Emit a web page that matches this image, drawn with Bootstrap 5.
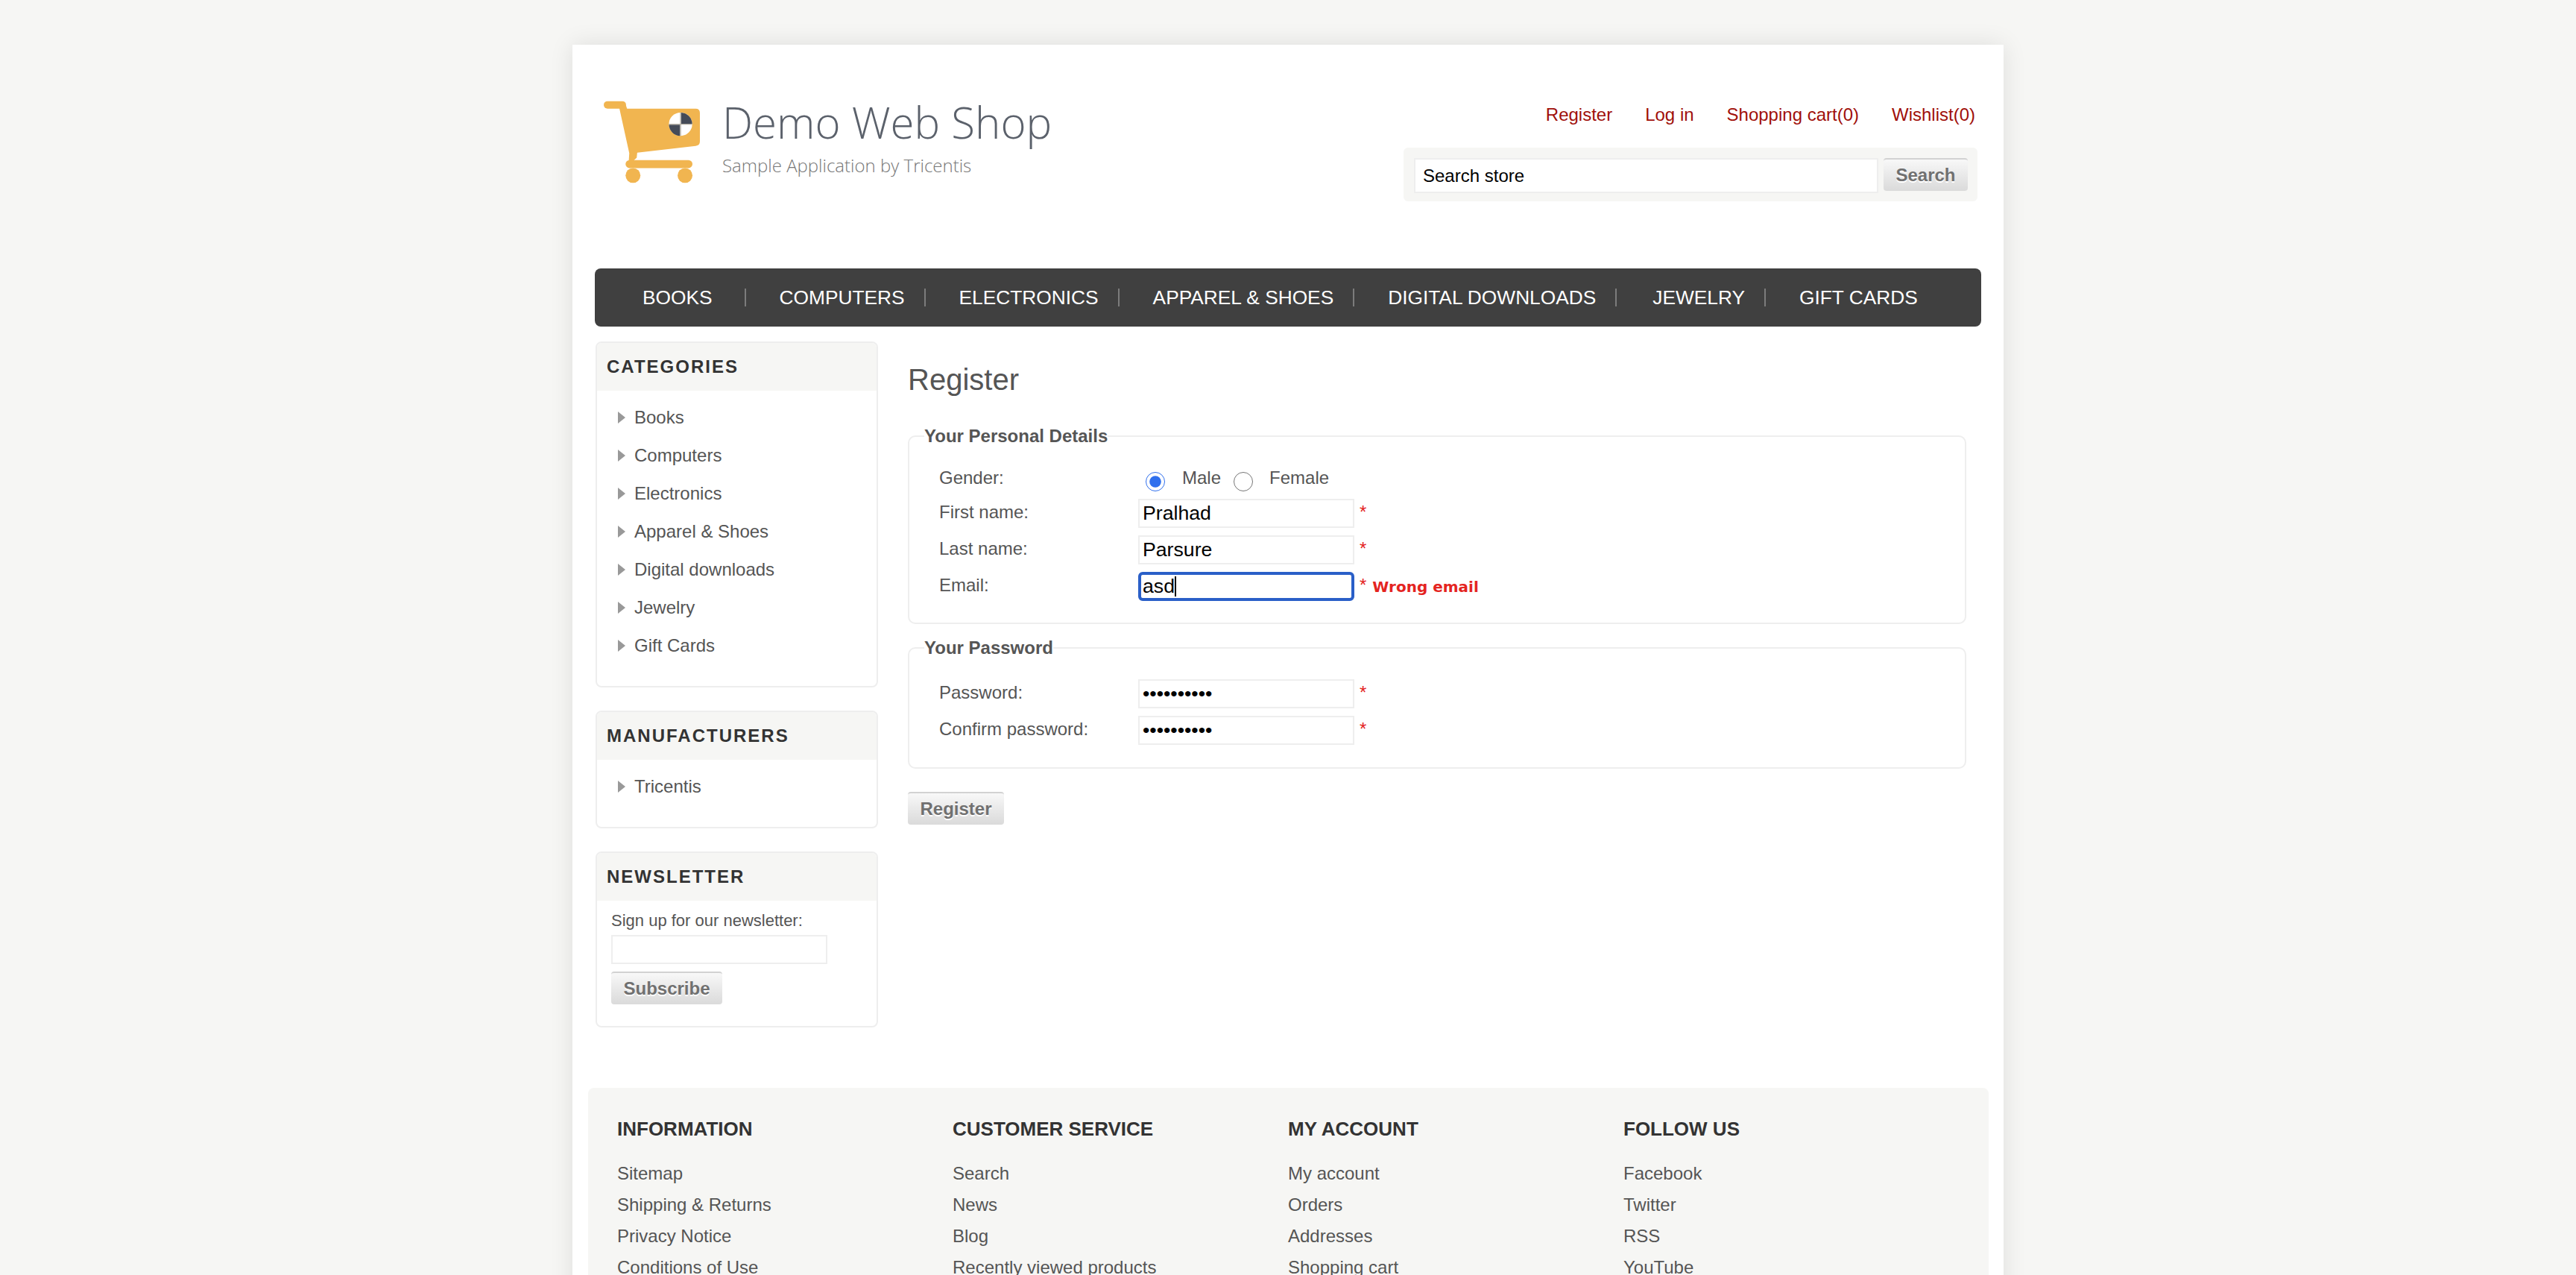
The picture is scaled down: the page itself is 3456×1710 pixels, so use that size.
<!DOCTYPE html>
<html lang="en">
<head>
    <meta charset="UTF-8">
    <title>Demo Web Shop. Register</title>
    <link href="https://cdn.jsdelivr.net/npm/bootstrap@5.3.0/dist/css/bootstrap.min.css" rel="stylesheet">
    <style>
        html, body {
            height: 100vh;
            overflow: hidden;
        }

        body {
            background-color: #f6f6f4;
            font-family: "Liberation Sans", Arial, sans-serif;
            font-size: 24px;
            line-height: 36px;
            color: #555;
        }

        a {
            color: inherit;
            text-decoration: none;
        }

        .page-wrap {
            width: 1920px;
            height: 1700px;
            margin: 60px auto 0;
            background-color: #fff;
            box-shadow: 0 0 30px rgba(0, 0, 0, .1);
        }

        /* header */
        .shop-head {
            height: 300px;
            padding: 75px 35px 0 41px;
        }

        .logo-cart {
            width: 131px;
            height: 111px;
        }

        .logo-text {
            margin-left: 29px;
            font-family: "Open Sans", sans-serif;
        }

        .logo-title {
            font-size: 58.2px;
            line-height: 58px;
            font-weight: 300;
            color: #5b616b;
        }

        .logo-sub {
            margin-top: 14px;
            font-size: 24px;
            line-height: 30px;
            font-weight: 300;
            color: #777;
        }

        .head-links {
            gap: 44px;
            padding-right: 3px;
            margin-top: 1px;
            margin-bottom: 26px;
            color: #a00f0a;
        }

        .search-box {
            width: 770px;
            height: 72px;
            padding: 14px 13px 14px 14px;
            background-color: #f6f6f4;
            border-radius: 6px;
        }

        .search-input {
            width: 623px;
            height: 47px;
            padding: 0 10px;
            font-size: 24px;
        }

        .shop-field {
            border: 2px solid #eee;
            background-color: #fff;
            color: #000;
            outline: 0;
        }

        .shop-btn {
            height: 44px;
            padding: 0 16.5px;
            border: 0;
            border-top: 2px solid #d2d2d2;
            border-radius: 4px;
            background: linear-gradient(#f8f8f8, #dadada);
            font-weight: 700;
            font-size: 24px;
            line-height: 38px;
            color: #707070;
            text-shadow: 0 2px 0 #fff;
        }

        /* menu */
        .top-menu {
            height: 78px;
            margin: 0 30px;
            padding-left: 18px;
            background-color: #404040;
            border-radius: 8px;
            font-size: 26.3px;
            line-height: 24px;
            color: #fff;
        }

        .top-menu li {
            padding: 0 26px 0 45px;
            border-right: 2px solid #7c7c7c;
        }

        .top-menu li:first-child {
            padding-left: 46px;
            padding-right: 43px;
        }

        .top-menu li:nth-child(6) {
            padding-left: 48px;
        }

        .top-menu li:last-child {
            border-right: 0;
        }

        .content-row {
            margin-top: 20px;
        }

        /* sidebar */
        .side-col {
            width: 379px;
            margin-left: 31px;
            flex-shrink: 0;
        }

        .side-box {
            margin-bottom: 31px;
            border: 2px solid #eee;
            border-radius: 8px;
            overflow: hidden;
        }

        .side-title {
            height: 64px;
            padding: 0 0 0 13px;
            background-color: #f6f6f4;
            border: 0;
            border-radius: 0;
            font-weight: 700;
            font-size: 24px;
            line-height: 64px;
            letter-spacing: 2px;
            color: #333;
        }

        .side-list {
            padding: 10px 0 29px 28px;
            line-height: 51px;
        }

        .side-list li {
            gap: 12px;
        }

        .side-arrow {
            width: 0;
            height: 0;
            border-left: 10px solid #999;
            border-top: 8px solid transparent;
            border-bottom: 8px solid transparent;
        }

        .news-body {
            padding: 9px 19px 29px 19px;
            font-size: 22px;
        }

        .news-input {
            display: block;
            width: 290px;
            height: 39px;
            margin: 1px 0 10px;
        }

        /* register form */
        .main-col {
            width: 1420px;
            margin-left: 40px;
            padding-top: 27px;
        }

        .page-heading {
            margin-bottom: 38px;
            font-size: 40px;
            line-height: 48px;
            font-weight: 400;
            color: #555;
        }

        .form-set {
            margin-bottom: 18px;
            padding: 28px 0 29px 40px;
            border: 2px solid #eee;
            border-radius: 10px;
        }

        .form-set:last-of-type {
            margin-bottom: 31px;
            padding-bottom: 30px;
        }

        .form-set legend {
            float: none;
            width: auto;
            margin: 0 0 0 -20px;
            padding: 0;
            font-size: 24px;
            line-height: 28px;
            font-weight: 700;
            color: #555;
        }

        .form-row {
            height: 39px;
            margin-bottom: 10px;
        }

        .form-row:last-child {
            margin-bottom: 0;
        }

        .gender-row {
            height: 34px;
            margin-bottom: 8px;
            line-height: 28px;
        }

        .form-row label {
            margin: 0;
        }

        .label-col {
            width: 267px;
            flex-shrink: 0;
        }

        .form-row:not(.gender-row) .label-col {
            padding-bottom: 3px;
        }

        .gender-row input {
            width: 26px;
            height: 26px;
            margin: 6px 0 0 10px;
            accent-color: #2f6fed;
        }

        .gender-row .first-radio {
            margin-right: 23px;
        }

        .gender-row .second-radio {
            margin: 6px 22px 0 17px;
        }

        .form-input {
            width: 290px;
            height: 39px;
            padding: 0 4px;
            font-size: 26.67px;
        }

        .form-input.is-focused {
            border: 4px solid #2a5fc8;
            border-radius: 6px;
            padding: 0 2px;
            caret-color: transparent;
        }

        .text-caret {
            position: absolute;
            left: 49px;
            top: 6px;
            width: 2px;
            height: 27px;
            background-color: #000;
        }

        .req-mark {
            margin-left: 7px;
            padding-bottom: 3px;
            color: #e4241f;
        }

        .field-error {
            margin-left: 8px;
            font-family: "DejaVu Sans", sans-serif;
            font-size: 20px;
            font-weight: 700;
            color: #e4241f;
        }

        /* footer */
        .shop-foot {
            margin: 81px 20px 0 21px;
            padding: 39px 40px 0 39px;
            height: 400px;
            background-color: #f6f6f4;
            border-radius: 8px;
        }

        .foot-title {
            margin-bottom: 23px;
            font-size: 26px;
            line-height: 32px;
            font-weight: 700;
            color: #333;
        }

        .foot-list {
            line-height: 42px;
        }
    </style>
</head>
<body>
    <div class="page-wrap">
        <!-- Header -->
        <header class="shop-head d-flex justify-content-between align-items-start">
            <div class="d-flex">
                <svg class="logo-cart" viewBox="55 73 392 334" role="img" aria-label="Shopping cart logo">
                    <g fill="#f1b550">
                        <rect x="57" y="75" width="90" height="30" rx="15"/>
                        <path d="M118 95 L146 90 L151 105 L428 105 Q445 105 445 122 L445 238 Q445 254 428 256 L192 283 L190 303 L176 316 L158 316 L160 285 Z"/>
                        <rect x="145" y="313" width="270" height="32" rx="16"/>
                        <circle cx="175" cy="375" r="30"/>
                        <circle cx="385" cy="375" r="30"/>
                    </g>
                    <circle cx="367" cy="168" r="47" fill="#fff"/>
                    <path d="M369 121 A47 47 0 0 1 414 166 L369 166 Z M365 170 L320 170 A47 47 0 0 0 365 215 Z" fill="#454b58"/>
                    <path d="M367 121 V215 M320 168 H414" stroke="#b5b0a5" stroke-width="4"/>
                </svg>
                <div class="logo-text">
                    <div class="logo-title">Demo Web Shop</div>
                    <div class="logo-sub">Sample Application by Tricentis</div>
                </div>
            </div>
            <div class="d-flex flex-column align-items-end">
                <div class="head-links d-flex">
                    <a href="#">Register</a>
                    <a href="#">Log in</a>
                    <a href="#">Shopping cart(0)</a>
                    <a href="#">Wishlist(0)</a>
                </div>
                <form class="search-box d-flex align-items-start justify-content-between">
                    <input class="shop-field search-input" type="text" value="Search store">
                    <button class="shop-btn" type="button">Search</button>
                </form>
            </div>
        </header>

        <!-- Top menu -->
        <ul class="top-menu list-unstyled d-flex align-items-center mb-0">
            <li><a href="#">BOOKS</a></li>
            <li><a href="#">COMPUTERS</a></li>
            <li><a href="#">ELECTRONICS</a></li>
            <li><a href="#">APPAREL &amp; SHOES</a></li>
            <li><a href="#">DIGITAL DOWNLOADS</a></li>
            <li><a href="#">JEWELRY</a></li>
            <li><a href="#">GIFT CARDS</a></li>
        </ul>

        <div class="content-row d-flex">
            <!-- Sidebar -->
            <aside class="side-col">
                <div class="card side-box">
                    <div class="card-header side-title">CATEGORIES</div>
                    <ul class="side-list list-unstyled mb-0">
                        <li class="d-flex align-items-center"><span class="side-arrow"></span><a href="#">Books</a></li>
                        <li class="d-flex align-items-center"><span class="side-arrow"></span><a href="#">Computers</a></li>
                        <li class="d-flex align-items-center"><span class="side-arrow"></span><a href="#">Electronics</a></li>
                        <li class="d-flex align-items-center"><span class="side-arrow"></span><a href="#">Apparel &amp; Shoes</a></li>
                        <li class="d-flex align-items-center"><span class="side-arrow"></span><a href="#">Digital downloads</a></li>
                        <li class="d-flex align-items-center"><span class="side-arrow"></span><a href="#">Jewelry</a></li>
                        <li class="d-flex align-items-center"><span class="side-arrow"></span><a href="#">Gift Cards</a></li>
                    </ul>
                </div>
                <div class="card side-box">
                    <div class="card-header side-title">MANUFACTURERS</div>
                    <ul class="side-list list-unstyled mb-0">
                        <li class="d-flex align-items-center"><span class="side-arrow"></span><a href="#">Tricentis</a></li>
                    </ul>
                </div>
                <div class="card side-box mb-0">
                    <div class="card-header side-title">NEWSLETTER</div>
                    <div class="news-body">
                        <label for="newsEmail" class="d-block">Sign up for our newsletter:</label>
                        <input class="shop-field news-input" id="newsEmail" type="text">
                        <button class="shop-btn" type="button">Subscribe</button>
                    </div>
                </div>
            </aside>

            <!-- Register form -->
            <main class="main-col">
                <h1 class="page-heading">Register</h1>
                <form>
                    <fieldset class="form-set">
                        <legend>Your Personal Details</legend>
                        <div class="form-row gender-row d-flex align-items-start">
                            <label class="label-col">Gender:</label>
                            <input class="first-radio" type="radio" name="gender" checked>
                            <label>Male</label>
                            <input class="second-radio" type="radio" name="gender">
                            <label>Female</label>
                        </div>
                        <div class="form-row d-flex align-items-center">
                            <label class="label-col">First name:</label>
                            <input class="shop-field form-input" type="text" value="Pralhad">
                            <span class="req-mark">*</span>
                        </div>
                        <div class="form-row d-flex align-items-center">
                            <label class="label-col">Last name:</label>
                            <input class="shop-field form-input" type="text" value="Parsure">
                            <span class="req-mark">*</span>
                        </div>
                        <div class="form-row d-flex align-items-center">
                            <label class="label-col">Email:</label>
                            <div class="position-relative d-flex">
                                <input class="shop-field form-input is-focused" type="text" value="asd">
                                <span class="text-caret"></span>
                            </div>
                            <span class="req-mark">*</span>
                            <span class="field-error">Wrong email</span>
                        </div>
                    </fieldset>
                    <fieldset class="form-set">
                        <legend>Your Password</legend>
                        <div class="form-row d-flex align-items-center">
                            <label class="label-col">Password:</label>
                            <input class="shop-field form-input" type="password" value="1234567890">
                            <span class="req-mark">*</span>
                        </div>
                        <div class="form-row d-flex align-items-center">
                            <label class="label-col">Confirm password:</label>
                            <input class="shop-field form-input" type="password" value="1234567890">
                            <span class="req-mark">*</span>
                        </div>
                    </fieldset>
                    <button class="shop-btn" type="button">Register</button>
                </form>
            </main>
        </div>

        <!-- Footer -->
        <footer class="shop-foot">
            <div class="row g-0">
                <div class="col-3">
                    <div class="foot-title">INFORMATION</div>
                    <ul class="foot-list list-unstyled mb-0">
                        <li><a href="#">Sitemap</a></li>
                        <li><a href="#">Shipping &amp; Returns</a></li>
                        <li><a href="#">Privacy Notice</a></li>
                        <li><a href="#">Conditions of Use</a></li>
                    </ul>
                </div>
                <div class="col-3">
                    <div class="foot-title">CUSTOMER SERVICE</div>
                    <ul class="foot-list list-unstyled mb-0">
                        <li><a href="#">Search</a></li>
                        <li><a href="#">News</a></li>
                        <li><a href="#">Blog</a></li>
                        <li><a href="#">Recently viewed products</a></li>
                    </ul>
                </div>
                <div class="col-3">
                    <div class="foot-title">MY ACCOUNT</div>
                    <ul class="foot-list list-unstyled mb-0">
                        <li><a href="#">My account</a></li>
                        <li><a href="#">Orders</a></li>
                        <li><a href="#">Addresses</a></li>
                        <li><a href="#">Shopping cart</a></li>
                    </ul>
                </div>
                <div class="col-3">
                    <div class="foot-title">FOLLOW US</div>
                    <ul class="foot-list list-unstyled mb-0">
                        <li><a href="#">Facebook</a></li>
                        <li><a href="#">Twitter</a></li>
                        <li><a href="#">RSS</a></li>
                        <li><a href="#">YouTube</a></li>
                    </ul>
                </div>
            </div>
        </footer>
    </div>

    <script src="https://cdn.jsdelivr.net/npm/bootstrap@5.3.0/dist/js/bootstrap.bundle.min.js"></script>
</body>
</html>
